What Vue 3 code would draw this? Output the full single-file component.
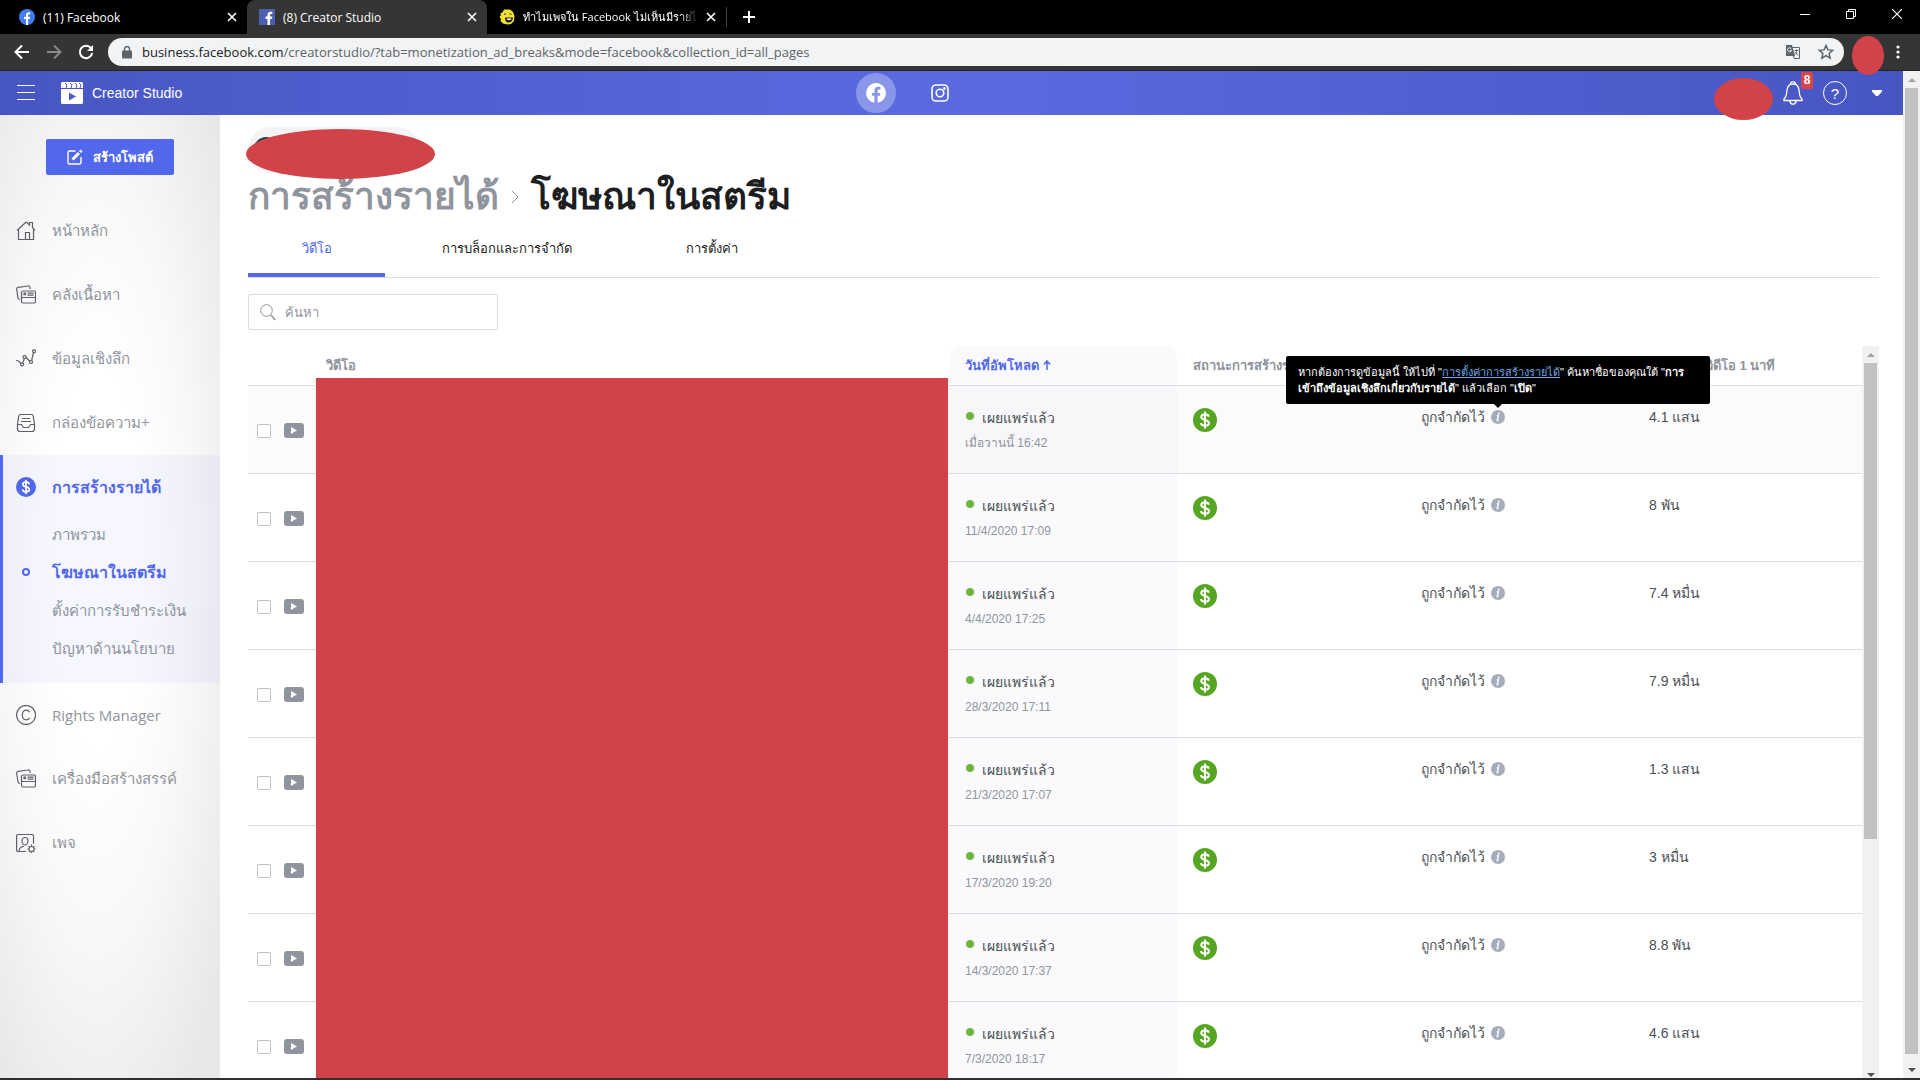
<template>
  <div class="browser">
    <div class="tab-strip">
      <div v-for="tab in browserTabs" :key="tab.title" class="browser-tab" :class="{ current: tab.current }">
        <svg v-if="tab.icon === 'round'" class="favicon" viewBox="0 0 16 16">
          <circle cx="8" cy="8" r="8" fill="#3f7df0" />
          <path d="M7 16V10H5V7.800h2V6.200C7 4.200 8.100 3.200 9.900 3.200c.7 0 1.300.1 1.300.1v1.900h-.9c-.9 0-1.200.6-1.200 1.200v1.400h2.100l-.4 2.200H9.100v6z" fill="#fff" />
        </svg>
        <svg v-else-if="tab.icon === 'square'" class="favicon" viewBox="0 0 16 16">
          <rect width="16" height="16" fill="#4f5fb0" />
          <path d="M8.500 16v-6H6.500V7.500h2V6c0-2.200 1.200-3.300 3.200-3.300.9 0 1.600.1 1.600.1V5h-1c-1 0-1.300.5-1.300 1.200v1.300h2.300l-.4 2.500H11v6z" fill="#fff" />
        </svg>
        <svg v-else class="favicon" viewBox="0 0 16 16">
          <path d="M5 .5h6L14 3l1.500 4L15 12l-3 3-4 .5-4-1L1.500 12 2 10 .5 8 2 6l-.5-2 2-.5z" fill="#f3e232" />
          <path d="M5 5.500l2-1M10.500 4.500l2 1" stroke="#222" />
          <path d="M6 8.500h8c0 3-2 5-4.500 5S6 11.500 6 8.500z" fill="#222" />
          <path d="M7.500 9.500h5l-1 1.500h-3z" fill="#fff" />
        </svg>
        <span class="browser-tab-title">{{ tab.title }}</span>
        <button class="plain" aria-label="Close tab">
          <svg width="10" height="10" viewBox="0 0 10 10"><path d="M1 1l8 8M9 1L1 9" stroke="#fff" stroke-width="1.600" /></svg>
        </button>
      </div>
      <button class="plain new-tab" aria-label="New tab">
        <svg width="12" height="12" viewBox="0 0 12 12"><path d="M6 0v12M0 6h12" stroke="#fff" stroke-width="2" /></svg>
      </button>
      <div class="window-buttons">
        <button class="plain" aria-label="Minimize">
          <svg width="10" height="10" viewBox="0 0 10 10"><path d="M0 5.500h10" stroke="#fff" /></svg>
        </button>
        <button class="plain" aria-label="Restore">
          <svg width="10" height="10" viewBox="0 0 10 10" fill="none" stroke="#fff"><path d="M.5 2.500h7v7h-7zM2.500 2.500v-2h7v7h-2" /></svg>
        </button>
        <button class="plain" aria-label="Close">
          <svg width="10" height="10" viewBox="0 0 10 10"><path d="M0 0l10 10M10 0L0 10" stroke="#fff" stroke-width="1.200" /></svg>
        </button>
      </div>
    </div>

    <div class="toolbar">
      <button class="plain" aria-label="Back">
        <svg width="16" height="16" viewBox="0 0 16 16" fill="none" stroke="#fff" stroke-width="2"><path d="M15 8H2M8 1.500L1.500 8 8 14.500" /></svg>
      </button>
      <button class="plain" aria-label="Forward">
        <svg width="16" height="16" viewBox="0 0 16 16" fill="none" stroke="#8a8a8a" stroke-width="2"><path d="M1 8h13M8 1.500L14.500 8 8 14.500" /></svg>
      </button>
      <button class="plain" aria-label="Reload">
        <svg width="16" height="16" viewBox="0 0 16 16" fill="none" stroke="#fff" stroke-width="2"><path d="M13 4.200A6.200 6.200 0 1 0 14.200 9" /><path d="M15 1v6H9z" fill="#fff" stroke="none" /></svg>
      </button>
      <div class="address">
        <svg width="10" height="13" viewBox="0 0 10 13"><rect y="4.500" width="10" height="8" rx="1" fill="#5f6368" /><path d="M2.500 5V3a2.500 2.500 0 0 1 5 0v2" fill="none" stroke="#5f6368" stroke-width="1.400" /></svg>
        <span class="url"><b>business.facebook.com</b>/creatorstudio/?tab=monetization_ad_breaks&amp;mode=facebook&amp;collection_id=all_pages</span>
        <svg width="16" height="16" viewBox="0 0 16 16">
          <path d="M7 3.500h7.500v11H9z" fill="#f1f3f4" stroke="#5f6368" />
          <path d="M1 1h6l3 11H1z" fill="#5f6368" />
          <path d="M6.300 4.800A2 2 0 1 0 6.500 6.500H5" fill="none" stroke="#f1f3f4" />
          <path d="M9.500 6.500h4M11.500 5.500v1c0 2-.5 3-1.500 4M10.500 8l2.500 3.500" fill="none" stroke="#5f6368" />
        </svg>
        <svg width="16" height="16" viewBox="0 0 16 16"><path d="M8 1.500l1.900 4.400 4.800.4-3.600 3.200 1.100 4.700L8 11.700l-4.200 2.500 1.100-4.700L1.300 6.300l4.800-.4z" fill="none" stroke="#5f6368" stroke-width="1.500" /></svg>
      </div>
      <div class="profile"><span class="profile-mask"></span></div>
      <button class="plain dots" aria-label="Menu">
        <svg width="4" height="14" viewBox="0 0 4 14" fill="#fff"><circle cx="2" cy="2" r="1.600" /><circle cx="2" cy="7" r="1.600" /><circle cx="2" cy="12" r="1.600" /></svg>
      </button>
    </div>

    <div class="page">
      <div class="page-content">
        <header class="app-header">
          <div class="header-left">
            <button class="plain" aria-label="Menu">
              <svg width="18" height="16" viewBox="0 0 18 16"><path d="M0 .5h18M0 7.500h18M0 14.500h18" stroke="#fff" /></svg>
            </button>
            <svg width="22" height="22" viewBox="0 0 22 22">
              <path d="M1.500 0h19A1.500 1.500 0 0 1 22 1.500V6H0V1.500A1.500 1.500 0 0 1 1.500 0zM0 7h22v13.500a1.500 1.500 0 0 1-1.500 1.500h-19A1.500 1.500 0 0 1 0 20.500z" fill="#fff" />
              <path d="M4 1l2 2-1 3M9 1l2 2-1 3M14 1l2 2-1 3M18 1l2 2-1 3" fill="none" stroke="#4c5cc9" />
              <path d="M8 10.500v8l7-4z" fill="#4c5cc9" />
            </svg>
            <span class="app-name">Creator Studio</span>
          </div>
          <div class="header-center">
            <button class="plain network on" aria-label="Facebook">
              <svg width="20" height="20" viewBox="0 0 20 20">
                <circle cx="10" cy="10" r="10" fill="#fff" />
                <path d="M8.400 20v-7.200H5.900V9.900h2.500V7.700c0-2.500 1.500-3.900 3.800-3.900 1.100 0 2.200.2 2.200.2v2.400h-1.200c-1.300 0-1.600.8-1.600 1.600v1.900h2.700l-.4 2.900h-2.300V20z" fill="#8a96e9" />
              </svg>
            </button>
            <button class="plain network" aria-label="Instagram">
              <svg width="18" height="18" viewBox="0 0 18 18" fill="none" stroke="#fff" stroke-width="1.600"><rect x="1" y="1" width="16" height="16" rx="4" /><circle cx="9" cy="9" r="3.800" /><circle cx="13.500" cy="4.500" r=".6" /></svg>
            </button>
          </div>
          <div class="header-right">
            <span class="user-mask"></span>
            <button class="plain bell" aria-label="Notifications">
              <svg width="20" height="24" viewBox="0 0 20 24" fill="none" stroke="#fff" stroke-width="1.300"><path d="M1 19.500c-.5-1 .2-2 1.200-3C3.800 15 3.500 12.500 4 9c.4-3.200 2.500-6 6-6s5.600 2.800 6 6c.5 3.500.2 6 1.800 7.500 1 1 1.700 2 1.200 3zM7.500 3.500C7 2 8 .8 10 .8S13 2 12.500 3.500M6.800 20c.4 2 1.600 3.200 3.200 3.200s2.800-1.200 3.200-3.200" /></svg>
              <span class="badge">8</span>
            </button>
            <button class="plain help" aria-label="Help">?</button>
            <button class="plain" aria-label="Account">
              <svg width="10" height="6" viewBox="0 0 10 6"><path d="M0 0h10v1.500L6 6H4L0 1.500z" fill="#fff" /></svg>
            </button>
          </div>
        </header>

        <div class="columns">
          <aside class="sidebar">
            <button class="create">
              <svg width="16" height="16" viewBox="0 0 16 16" fill="none" stroke="#fff"><path d="M8.500 2H2.500A1.500 1.500 0 0 0 1 3.500v10A1.500 1.500 0 0 0 2.500 15h10a1.500 1.500 0 0 0 1.500-1.500V8" stroke-width="1.400" /><path d="M5.500 10.500L12 4M13 3l1.500-1.500" stroke-width="3" /></svg>
              สร้างโพสต์
            </button>
            <nav>
              <div v-for="item in navItems" :key="item.label" class="nav-group" :class="{ active: item.children }">
                <a href="#" class="nav-item">
                  <svg v-if="item.children" width="20" height="20" viewBox="0 0 20 20">
                    <circle cx="10" cy="10" r="10" fill="#5168ec" />
                    <path :d="dollar" fill="none" stroke="#fff" stroke-width="1.700" />
                  </svg>
                  <svg v-else width="20" height="20" viewBox="0 0 20 20" fill="none" stroke="#5d6069" stroke-width="1.200">
                    <path v-for="d in icons[item.icon]" :key="d" :d="d" />
                  </svg>
                  <span>{{ item.label }}</span>
                </a>
                <div v-if="item.children" class="sub-items">
                  <a v-for="child in item.children" :key="child" href="#" class="sub-item" :class="{ selected: child === currentPage }">{{ child }}</a>
                </div>
              </div>
            </nav>
          </aside>

          <main>
            <div class="page-picker">
              <span class="picker-avatar"></span>
              <span class="picker-mask"></span>
            </div>
            <h1>
              <a href="#">การสร้างรายได้</a>
              <svg width="8" height="14" viewBox="0 0 8 14"><path d="M1 1l6 6-6 6" fill="none" stroke="#90949c" /></svg>
              <span>{{ currentPage }}</span>
            </h1>
            <div class="tabs">
              <button v-for="tab in tabs" :key="tab" :class="{ selected: tab === tabs[0] }">{{ tab }}</button>
            </div>
            <div class="search">
              <svg width="16" height="17" viewBox="0 0 16 17" fill="none" stroke="#90949c"><circle cx="6.500" cy="6.500" r="5.800" /><path d="M10.800 11l4.500 5" stroke-width="1.500" /></svg>
              <input v-model="query" type="text" placeholder="ค้นหา" aria-label="ค้นหา">
            </div>

            <div class="table-area">
              <div class="table-clip">
                <table>
                  <colgroup>
                    <col class="col-check">
                    <col>
                    <col class="col-data">
                    <col class="col-data">
                    <col class="col-data">
                    <col class="col-data">
                  </colgroup>
                  <thead>
                    <tr>
                      <th></th>
                      <th class="video-head">วิดีโอ</th>
                      <th class="sorted">
                        วันที่อัพโหลด
                        <svg width="8" height="10" viewBox="0 0 8 10" fill="none" stroke="#5168ec" stroke-width="1.500"><path d="M4 10V1M1 4.500L4 1l3 3.500" /></svg>
                      </th>
                      <th>สถานะการสร้างรายได้</th>
                      <th></th>
                      <th>ยอดรับชมวิดีโอ 1 นาที</th>
                    </tr>
                  </thead>
                  <tbody>
                    <tr v-for="(row, i) in rows" :key="row.date" :class="{ hovered: i === 0 }">
                      <td class="check-cell">
                        <div class="check">
                          <input type="checkbox" :aria-label="row.date">
                          <svg width="20" height="15" viewBox="0 0 20 15"><rect width="20" height="15" rx="3" fill="#90949c" /><path d="M7 4v7l6-3.500z" fill="#fff" /></svg>
                        </div>
                      </td>
                      <td></td>
                      <td class="sorted">
                        <div class="status"><i></i>เผยแพร่แล้ว</div>
                        <div class="date">{{ row.date }}</div>
                      </td>
                      <td>
                        <svg width="24" height="24" viewBox="0 0 20 20"><circle cx="10" cy="10" r="10" fill="#56a621" /><path :d="dollar" fill="none" stroke="#fff" stroke-width="1.700" /></svg>
                      </td>
                      <td>
                        <div class="limited">
                          ถูกจำกัดไว้
                          <span class="info">
                            <svg width="14" height="14" viewBox="0 0 14 14"><circle cx="7" cy="7" r="7" fill="#a4adb9" /><path d="M5.800 5.800h1.500l-1 4.700h1.200" fill="none" stroke="#fff" stroke-width="1.400" /><circle cx="7.800" cy="3.400" r="1" fill="#fff" /></svg>
                            <span v-if="i === 0" class="tooltip" role="tooltip">หากต้องการดูข้อมูลนี้ ให้ไปที่ "<a href="#">การตั้งค่าการสร้างรายได้</a>" ค้นหาชื่อของคุณใต้ "<b>การ<br>เข้าถึงข้อมูลเชิงลึกเกี่ยวกับรายได้</b>" แล้วเลือก "<b>เปิด</b>"</span>
                          </span>
                        </div>
                      </td>
                      <td><div class="views">{{ row.views }}</div></td>
                    </tr>
                  </tbody>
                </table>
                <div class="video-mask"></div>
              </div>
              <div class="scrollbar inner">
                <i class="arrow up"></i>
                <span class="thumb"></span>
                <i class="arrow down"></i>
              </div>
            </div>
          </main>
        </div>
      </div>
      <div class="scrollbar">
        <i class="arrow up"></i>
        <span class="thumb"></span>
        <i class="arrow down"></i>
      </div>
    </div>
    <div class="taskbar"></div>
  </div>
</template>

<script setup>
import { ref } from "vue";

const query = ref("");
const currentPage = "โฆษณาในสตรีม";

const browserTabs = [
  { title: "(11) Facebook", icon: "round" },
  { title: "(8) Creator Studio", icon: "square", current: true },
  { title: "ทำไมเพจใน Facebook ไม่เห็นมีรายได้", icon: "smile" },
];

const tabs = ["วิดีโอ", "การบล็อกและการจำกัด", "การตั้งค่า"];

const navItems = [
  { label: "หน้าหลัก", icon: "home" },
  { label: "คลังเนื้อหา", icon: "library" },
  { label: "ข้อมูลเชิงลึก", icon: "insights" },
  { label: "กล่องข้อความ+", icon: "inbox" },
  {
    label: "การสร้างรายได้",
    children: ["ภาพรวม", currentPage, "ตั้งค่าการรับชำระเงิน", "ปัญหาด้านนโยบาย"],
  },
  { label: "Rights Manager", icon: "rights" },
  { label: "เครื่องมือสร้างสรรค์", icon: "library" },
  { label: "เพจ", icon: "pages" },
];

const dollar = "M13.200 7.300C13 5.900 11.800 5.200 10 5.200S6.900 6 6.900 7.400c0 3.300 6.400 1.700 6.400 5.100 0 1.500-1.400 2.300-3.300 2.300s-3.300-.8-3.400-2.300M10 3v14";

const icons = {
  home: ["M1 9.500L10 1l3.500 3V1.500h3V6.500l2.500 3", "M2.500 8.500v10h15v-10", "M9.500 18.500v-7h4v7"],
  library: ["M4 14.500C2.500 14.500 2.200 14 2 13L.7 4.500C.5 3 1 2.500 2 2.300L12 1c1.200-.2 1.800.4 2 1.500l.2 1.500", "M7 6h11c1 0 1.500.5 1.500 1.500v9c0 1-.5 1.500-1.500 1.500H7c-1 0-1.500-.5-1.500-1.500v-9C5.500 6.500 6 6 7 6z", "M8 8.200h1.500v1.500H8zM11.500 8.200h6M11.500 10.200h6M5.500 12.500h14"],
  insights: ["M0 11.500L2.500 12l2.500 2.500M6.500 14.500l2-5.500M10 8.500l4 4M15.500 12L17.500 3.500", "M6 14a1.500 1.500 0 1 0 .1 0zM8.500 6.500a1.500 1.500 0 1 0 .1 0zM15 11.500a1.500 1.500 0 1 0 .1 0zM18 .8a1.500 1.500 0 1 0 .1 0z"],
  inbox: ["M4.500 1.500h11c1 0 1.500.5 1.700 1.500L18.500 11v5c0 1.500-.8 2.500-2.500 2.500H4c-1.700 0-2.500-1-2.500-2.500v-5L2.800 3c.2-1 .7-1.500 1.700-1.500z", "M1.500 11.500h4l2 3h5l2-3h4", "M6 5.500h8M5 8.500h10"],
  rights: ["M10 .6a9.400 9.400 0 1 0 .1 0z", "M13.500 7.200C12.900 6 11.800 5.200 10.300 5.200 7.900 5.200 6.300 7 6.300 10s1.600 4.800 4 4.800c1.500 0 2.700-.8 3.300-2.100"],
  pages: ["M10 18.500H1.800C1 18.500.6 18 .6 17.200V2.800C.6 2 1 1.500 1.800 1.500h14.400c.8 0 1.300.5 1.300 1.300v8", "M9 4.500C7.500 4.500 6 5.700 6 8s1.500 4 3 4 3-1.700 3-4-1.500-3.500-3-3.500zM3 18c.3-3 2-4.500 5-4.500", "M15.500 13.500a2.500 2.500 0 1 0 .1 0zM15.500 11.500v2M15.500 18.500v2M11.500 16h2M17.500 16h2M12.700 13.200l1.300 1.300M17 17.500l1.300 1.300M12.700 18.800l1.300-1.300M17 14.500l1.300-1.300"],
};

const rows = [
  { date: "เมื่อวานนี้ 16:42", views: "4.1 แสน" },
  { date: "11/4/2020 17:09", views: "8 พัน" },
  { date: "4/4/2020 17:25", views: "7.4 หมื่น" },
  { date: "28/3/2020 17:11", views: "7.9 หมื่น" },
  { date: "21/3/2020 17:07", views: "1.3 แสน" },
  { date: "17/3/2020 19:20", views: "3 หมื่น" },
  { date: "14/3/2020 17:37", views: "8.8 พัน" },
  { date: "7/3/2020 18:17", views: "4.6 แสน" },
];
</script>

<style>
body {
  overflow: hidden;
}
</style>

<style scoped>
*,
*::before,
*::after {
  box-sizing: border-box;
}

.browser {
  display: flex;
  flex-direction: column;
  height: 100vh;
  overflow: hidden;
  background: #fff;
  color: #1c1e21;
  font-family: "Liberation Sans", Arial, sans-serif;
  font-size: 13px;
}

svg {
  display: block;
  flex: none;
}

a {
  color: inherit;
  text-decoration: none;
}

button,
input {
  font-family: inherit;
}

.plain {
  display: flex;
  align-items: center;
  justify-content: center;
  padding: 0;
  border: 0;
  background: none;
}

/* browser window */
.tab-strip {
  display: flex;
  align-items: center;
  flex: none;
  height: 34px;
  padding-left: 7px;
  background: #000;
  color: #fff;
  font-family: "Open Sans", "Noto Sans", sans-serif;
  font-size: 12px;
}

.browser-tab {
  display: flex;
  align-items: center;
  gap: 8px;
  width: 240px;
  height: 34px;
  padding: 0 10px 0 12px;
}

.browser-tab.current {
  border-radius: 8px 8px 0 0;
  background: #353535;
}

.browser-tab:nth-child(3) {
  border-right: 1px solid #444;
  height: 20px;
  font-size: 11px;
}

.favicon {
  width: 16px;
  height: 16px;
}

.browser-tab-title {
  flex: 1;
  overflow: hidden;
  white-space: nowrap;
}

.browser-tab:nth-child(3) .browser-tab-title {
  mask-image: linear-gradient(to right, #000 90%, transparent);
}

.new-tab {
  margin-left: 16px;
}

.window-buttons {
  display: flex;
  height: 28px;
  margin: 0 0 auto auto;
}

.window-buttons .plain {
  width: 46px;
}

.toolbar {
  display: flex;
  align-items: center;
  gap: 16px;
  flex: none;
  height: 37px;
  padding: 0 20px 0 14px;
  background: #353535;
  border-bottom: 1px solid #222;
}

.address {
  display: flex;
  align-items: center;
  gap: 17px;
  flex: 1;
  height: 28px;
  margin-left: -2px;
  padding: 0 10px 0 14px;
  border-radius: 14px;
  background: #f1f3f4;
  color: #5f6368;
  font-family: "Open Sans", "Noto Sans", sans-serif;
  font-size: 13px;
}

.address > svg:first-child {
  margin-right: -7px;
}

.url {
  flex: 1;
}

.url b {
  color: #202124;
  font-weight: 400;
}

.profile {
  position: relative;
  width: 16px;
  height: 28px;
}

.profile-mask {
  position: absolute;
  top: -2px;
  left: -8px;
  z-index: 2;
  width: 32px;
  height: 39px;
  border-radius: 50%;
  background: #d14349;
}

.dots {
  margin-left: 4px;
}

.taskbar {
  flex: none;
  height: 2px;
  background: #2e2e33;
}

.page {
  display: flex;
  flex: 1;
  min-height: 0;
}

.page-content {
  display: flex;
  flex-direction: column;
  flex: 1;
  min-width: 0;
}

/* app header */
.app-header {
  display: grid;
  grid-template-columns: 10fr auto 11fr;
  align-items: center;
  flex: none;
  height: 44px;
  padding: 0 21px 0 17px;
  background: linear-gradient(90deg, #4856c3, #5a6be0 50%, #4856c3);
  color: #fff;
}

.header-left,
.header-center,
.header-right {
  display: flex;
  align-items: center;
}

.header-left {
  gap: 26px;
}

.app-name {
  margin-left: -17px;
  font-size: 14px;
}

.header-center {
  gap: 24px;
}

.network {
  width: 40px;
  height: 40px;
  border-radius: 50%;
}

.network.on {
  background: #8a96e9;
}

.header-right {
  position: relative;
  justify-content: flex-end;
  gap: 20px;
}

.user-mask {
  position: absolute;
  top: -3px;
  right: 109px;
  width: 59px;
  height: 42px;
  border-radius: 50%;
  background: #d14349;
}

.bell {
  position: relative;
}

.badge {
  position: absolute;
  top: -9px;
  right: -10px;
  width: 12px;
  border-radius: 2px;
  background: #d9444a;
  font-size: 12px;
  font-weight: 700;
  line-height: 17px;
  color: #fff;
}

.help {
  width: 24px;
  height: 24px;
  margin-right: 5px;
  border: 1px solid #fff;
  border-radius: 50%;
  color: #fff;
  font-size: 15px;
}

.columns {
  display: flex;
  flex: 1;
  min-height: 0;
}

/* sidebar */
.sidebar {
  flex: none;
  width: 220px;
  padding-top: 24px;
  background: radial-gradient(ellipse 160px 640px at 44% 46%, #fff 30%, #f8f8f8 60%, #e8e8e8 100%);
}

.create {
  display: flex;
  align-items: center;
  justify-content: center;
  gap: 10px;
  width: 128px;
  height: 36px;
  margin: 0 auto 24px;
  border: 0;
  border-radius: 2px;
  background: #5168ec;
  color: #fff;
  font-size: 13px;
  font-weight: 700;
}

.nav-item {
  display: flex;
  align-items: center;
  gap: 16px;
  height: 64px;
  padding-left: 16px;
  color: #90949c;
  font-family: "Open Sans", "Noto Sans", sans-serif;
  font-size: 15px;
}

.nav-group.active {
  padding-bottom: 15px;
  background: rgba(81, 104, 236, 0.06);
  box-shadow: inset 3px 0 #5168ec;
}

.active .nav-item {
  color: #5168ec;
  font-size: 16px;
  font-weight: 700;
}

.sub-items {
  margin-top: -3px;
}

.sub-item {
  position: relative;
  display: block;
  padding-left: 52px;
  color: #90949c;
  font-size: 15px;
  line-height: 38px;
}

.sub-item.selected {
  color: #5168ec;
  font-size: 16px;
  font-weight: 700;
}

.sub-item.selected::before {
  content: "";
  position: absolute;
  top: 14px;
  left: 22px;
  width: 8px;
  height: 8px;
  border: 2px solid #5168ec;
  border-radius: 50%;
}

/* main column */
main {
  display: flex;
  flex-direction: column;
  flex: 1;
  min-width: 0;
  padding: 12px 24px 0 28px;
}

.page-picker {
  position: relative;
  flex: none;
  width: 172px;
  height: 46px;
  border-radius: 23px;
  background: #f2f3f5;
}

.picker-avatar {
  position: absolute;
  top: 10px;
  left: 6px;
  width: 24px;
  height: 24px;
  border-radius: 50%;
  background: #2b3a48;
}

.picker-mask {
  position: absolute;
  top: 2px;
  left: -2px;
  width: 189px;
  height: 50px;
  border-radius: 50%;
  background: #d14349;
}

h1 {
  display: flex;
  align-items: center;
  gap: 12px;
  flex: none;
  height: 48px;
  margin: 0;
  font-size: 37px;
  line-height: 48px;
}

h1 a {
  color: #90949c;
}

.tabs {
  display: flex;
  flex: none;
  height: 57px;
  border-bottom: 1px solid #dadde1;
}

.tabs button {
  min-width: 137px;
  padding: 2px 57px 0;
  border: 0;
  border-bottom: 4px solid transparent;
  background: none;
  color: #1c1e21;
  font-size: 13px;
}

.tabs button.selected {
  padding: 2px 52px 0;
  border-color: #5168ec;
  color: #5168ec;
}

.search {
  display: flex;
  align-items: center;
  gap: 9px;
  flex: none;
  width: 250px;
  height: 36px;
  margin: 16px 0;
  padding: 0 11px;
  border: 1px solid #dadde1;
  border-radius: 2px;
}

.search input {
  flex: 1;
  min-width: 0;
  padding: 0;
  border: 0;
  outline: 0;
  font-size: 13px;
}

.search input::placeholder {
  color: #90949c;
}

/* video table */
.table-area {
  display: flex;
  flex: 1;
  min-height: 0;
}

.table-clip {
  position: relative;
  flex: 1;
  min-width: 0;
  overflow: hidden;
}

table {
  width: 100%;
  border-collapse: separate;
  border-spacing: 0;
  table-layout: fixed;
}

.col-check {
  width: 68px;
}

.col-data {
  width: 228px;
}

.col-data:last-child {
  width: 229px;
}

th {
  height: 40px;
  padding: 0 16px;
  border-bottom: 1px solid #dadde1;
  color: #90949c;
  font-size: 13px;
  text-align: left;
  white-space: nowrap;
}

th.video-head {
  padding-left: 10px;
}

th.sorted {
  border-radius: 12px 12px 0 0;
  color: #5168ec;
}

th svg {
  display: inline-block;
}

td {
  height: 88px;
  padding: 22px 16px 0;
  border-bottom: 1px solid #dadde1;
  color: #4b4f56;
  vertical-align: top;
}

.sorted {
  background: #fafafc;
}

.hovered td {
  background: #fbfbfb;
}

.hovered td.sorted {
  background: #f7f7f9;
}

td.check-cell {
  padding: 2px 0 0 9px;
  vertical-align: middle;
}

.check {
  display: flex;
  align-items: center;
  gap: 13px;
}

.check input {
  appearance: none;
  width: 14px;
  height: 14px;
  margin: 0;
  border: 1px solid #bec0ca;
  border-radius: 2px;
  background: #fff;
}

.status {
  display: flex;
  align-items: center;
  gap: 8px;
  font-size: 14px;
  line-height: 20px;
}

.status i {
  width: 8px;
  height: 8px;
  margin: 0 0 4px 1px;
  border-radius: 50%;
  background: #6bb83c;
}

.date {
  margin-top: 5px;
  color: #90949c;
  font-size: 12px;
  line-height: 20px;
}

.limited {
  display: flex;
  align-items: center;
  gap: 6px;
}

.limited,
.views {
  font-size: 14px;
  line-height: 18px;
}

.info {
  position: relative;
}

.tooltip {
  position: absolute;
  bottom: 20px;
  left: 50%;
  z-index: 3;
  width: 424px;
  padding: 8px 12px;
  border-radius: 2px;
  background: #000;
  color: #fff;
  font-size: 11px;
  line-height: 16px;
  white-space: nowrap;
  transform: translateX(-50%);
}

.tooltip::after {
  content: "";
  position: absolute;
  top: 100%;
  left: 50%;
  margin-left: -4px;
  border: 4px solid transparent;
  border-top-color: #000;
  border-bottom: 0;
}

.tooltip a {
  color: #6aa5e3;
  text-decoration: underline;
}

.video-mask {
  position: absolute;
  top: 32px;
  right: 914px;
  bottom: 0;
  left: 68px;
  background: #d14349;
}

.scrollbar {
  display: flex;
  flex-direction: column;
  align-items: center;
  flex: none;
  width: 17px;
  background: #f1f1f1;
}

.thumb {
  flex: 1;
  width: 13px;
  margin-bottom: 7px;
  background: #c1c1c1;
}

.inner .thumb {
  flex: none;
  height: 65%;
  margin-bottom: auto;
}

.arrow {
  flex: none;
  display: flex;
  align-items: center;
  height: 17px;
}

.arrow::before {
  content: "";
  border: 4px solid transparent;
}

.up::before {
  border-top: 0;
  border-bottom-color: #a3a3a3;
}

.down::before {
  border-top-color: #505050;
  border-bottom: 0;
}

.inner .down {
  height: 6px;
}
</style>
